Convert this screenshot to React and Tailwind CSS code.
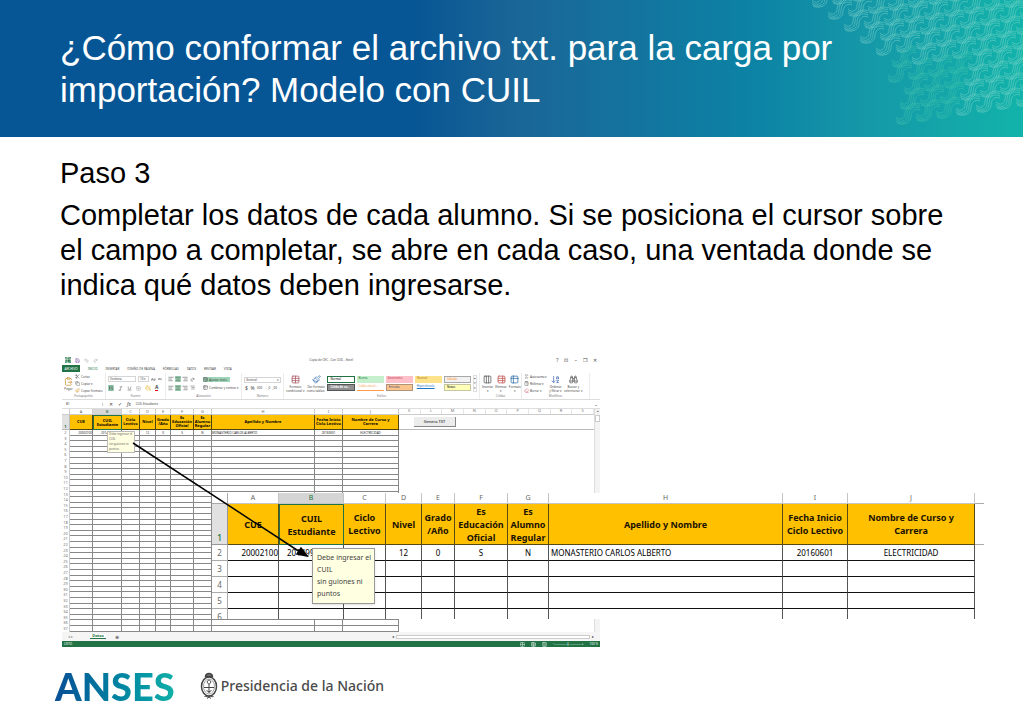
import {
  AArrowDown,
  AlignCenter,
  AlignLeft,
  AlignRight,
  ArrowDownAZ,
  Binoculars,
  Bold,
  ClipboardPaste,
  Columns3,
  Copy,
  Eraser,
  Grid2x2,
  Italic,
  PaintBucket,
  Paintbrush,
  Redo2,
  Save,
  Scissors,
  Sigma,
  Table,
  Table2,
  TableProperties,
  Underline,
  Undo2,
} from "lucide-react";

const columns = [
  { letter: "A", title: "CUE", value: "20002100", small: "w-[23px]", big: "w-[51px]", align: "text-right" },
  { letter: "B", title: "CUIL Estudiante", value: "20149951", small: "w-[29px]", big: "w-[65px]", align: "text-left pl-2" },
  { letter: "C", title: "Ciclo Lectivo", value: "", small: "w-[18px]", big: "w-[42px]", align: "text-center" },
  { letter: "D", title: "Nivel", value: "12", small: "w-[16px]", big: "w-[36px]", align: "text-center" },
  { letter: "E", title: "Grado /Año", value: "0", small: "w-[15px]", big: "w-[33px]", align: "text-center" },
  { letter: "F", title: "Es Educación Oficial", value: "S", small: "w-[23px]", big: "w-[53px]", align: "text-center" },
  { letter: "G", title: "Es Alumno Regular", value: "N", small: "w-[18px]", big: "w-[41px]", align: "text-center" },
  { letter: "H", title: "Apellido y Nombre", value: "MONASTERIO CARLOS ALBERTO", small: "w-[103px]", big: "w-[234px]", align: "text-left" },
  { letter: "I", title: "Fecha Inicio Ciclo Lectivo", value: "20160601", small: "w-[28px]", big: "w-[65px]", align: "text-center" },
  { letter: "J", title: "Nombre de Curso y Carrera", value: "ELECTRICIDAD", small: "w-[56px]", big: "w-[127px]", align: "text-center" },
];

const tabs = ["INICIO", "INSERTAR", "DISEÑO DE PÁGINA", "FÓRMULAS", "DATOS", "REVISAR", "VISTA"];

const cellStyles = [
  { label: "Normal", look: "border border-[#217346] bg-white text-black" },
  { label: "Buena", look: "bg-[#c6efce] text-[#2f7d3c]" },
  { label: "Incorrecto", look: "bg-[#ffc0ca] text-[#b0303c]" },
  { label: "Neutral", look: "bg-[#ffe38a] text-[#a8751c]" },
  { label: "Cálculo", look: "border border-[#a8a8a8] bg-[#f2f2f2] text-[#fa7d00]" },
  { label: "Celda de co...", look: "border border-[#555] bg-[#8f8f8f] text-white font-bold" },
  { label: "Celda vincul...", look: "border-b border-[#ff9b4a] text-[#fa9d50]" },
  { label: "Entrada", look: "border border-[#b0947a] bg-[#fbc58e] text-[#4f4f76]" },
  { label: "Hipervínculo", look: "text-[#1f74c4] underline" },
  { label: "Notas", look: "border border-[#c5c5a0] bg-[#ffffb8] text-black" },
];

const note = ["Debe ingresar el", "CUIL", "sin guiones ni", "puntos"];

// left limit of the woven pattern for a given height
const edge = [
  [0, 806],
  [27, 840],
  [52, 866],
  [94, 886],
  [130, 900],
];

function edgeAt(y) {
  for (let i = 1; i < edge.length; i++) {
    const [y0, x0] = edge[i - 1];
    const [y1, x1] = edge[i];
    if (y <= y1) return x0 + ((x1 - x0) * (y - y0)) / (y1 - y0);
  }
  return 1100;
}

const waves = [];
for (let i = -30; i < 40; i++) {
  for (let j = -30; j < 40; j++) {
    const x = 812 + i * 16 + j * 20;
    const y = 2 + i * 12 - j * 3;
    const floor = x > 990 ? 106 : 120;
    if (y > -12 && y < floor && x >= edgeAt(Math.max(y, 0)) && x < 1030) waves.push([x, y]);
  }
}

function Weave() {
  return (
    <svg className="absolute top-0 right-0 h-[137px] w-[223px]" viewBox="800 0 223 137" fill="none" aria-hidden="true">
      {waves.map(([x, y]) => {
        const faded = y > 60 && x < 955;
        return (
          <g
            key={`${x}:${y}`}
            transform={`translate(${x} ${y})`}
            stroke={faded ? "#4fcdb0" : "#8fdccf"}
            strokeOpacity={faded ? 0.5 : 0.55}
            strokeWidth="0.8"
          >
            <path d="M0 0c4 4 11 3 11-4s5-13 13-9" />
            <path d="M0-2c4 4 9 2 9-3s6-14 15-10" />
            <path d="M0 2c5 4 13 2 13-5s4-11 11-8" />
            <path d="M1 4c6 3 14 0 14-6s4-9 9-7" />
          </g>
        );
      })}
    </svg>
  );
}

function RibbonGroup({ label, width, children }) {
  return (
    <div className={`flex h-full shrink-0 flex-col border-r border-[#ececec] ${width}`}>
      <div className="flex min-h-0 flex-1 items-center gap-[2px] px-[2px]">{children}</div>
      <div className="h-[5px] text-center leading-[4px] text-[#777]">{label}</div>
    </div>
  );
}

function BigTool({ icon: Icon, lines, color = "text-[#555]" }) {
  return (
    <button className="flex shrink-0 flex-col items-center leading-[4px]">
      <Icon className={`mb-[1px] size-[9px] ${color}`} />
      {lines.map((line) => (
        <span key={line}>{line}</span>
      ))}
    </button>
  );
}

function SmallTool({ icon: Icon, label, color = "text-[#555]" }) {
  return (
    <button className="flex items-center gap-[1px] whitespace-nowrap leading-[4px]">
      <Icon className={`size-[5px] ${color}`} />
      {label}
    </button>
  );
}

function Ribbon() {
  return (
    <div className="flex h-[28px] border-b border-[#dcdcdc] pt-[1px]">
      <RibbonGroup label="Portapapeles" width="w-[44px]">
        <BigTool icon={ClipboardPaste} lines={["Pegar"]} color="text-[#c8963c]" />
        <div className="flex flex-col gap-[2px]">
          <SmallTool icon={Scissors} label="Cortar" />
          <SmallTool icon={Copy} label="Copiar ▾" />
          <SmallTool icon={Paintbrush} label="Copiar formato" color="text-[#d59a2e]" />
        </div>
      </RibbonGroup>
      <RibbonGroup label="Fuente" width="w-[60px]">
        <div className="flex flex-1 flex-col gap-[3px]">
          <div className="flex items-center gap-[2px]">
            <div className="h-[6px] w-[28px] border border-[#d5d5d5] pl-[1px] leading-[4px]">Verdana</div>
            <div className="h-[6px] w-[11px] border border-[#d5d5d5] pl-[1px] leading-[4px]">10 ▾</div>
            <AArrowDown className="size-[5px]" />
            <AArrowDown className="size-[4px]" />
          </div>
          <div className="flex items-center gap-[4px]">
            <Bold className="size-[6px] bg-[#9fd5b7]" />
            <Italic className="size-[5px]" />
            <Underline className="size-[5px]" />
            <Grid2x2 className="size-[5px] text-[#aaa]" />
            <PaintBucket className="size-[6px] text-[#e0b020]" />
            <span className="border-b border-red-600 text-[5px] leading-[5px] font-bold">A</span>
          </div>
        </div>
      </RibbonGroup>
      <RibbonGroup label="Alineación" width="w-[76px]">
        <div className="flex flex-col gap-[3px]">
          <div className="flex gap-[1px]">
            <AlignLeft className="size-[6px]" />
            <AlignCenter className="size-[6px] bg-[#9fd5b7]" />
            <AlignRight className="size-[6px]" />
          </div>
          <div className="flex gap-[1px]">
            <AlignLeft className="size-[6px]" />
            <AlignCenter className="size-[6px] bg-[#9fd5b7]" />
            <AlignRight className="size-[6px]" />
          </div>
        </div>
        <div className="flex flex-col gap-[3px]">
          <Redo2 className="size-[5px]" />
          <AlignRight className="size-[5px]" />
        </div>
        <div className="flex flex-col items-start gap-[3px] pl-[6px]">
          <span className="bg-[#9fd5b7] pr-[3px]">
            <SmallTool icon={TableProperties} label="Ajustar texto" />
          </span>
          <SmallTool icon={Table2} label="Combinar y centrar ▾" />
        </div>
      </RibbonGroup>
      <RibbonGroup label="Número" width="w-[42px]">
        <div className="flex flex-1 flex-col gap-[3px]">
          <div className="flex h-[6px] justify-between border border-[#d5d5d5] px-[1px] leading-[4px]">
            <span>General</span>
            <span>▾</span>
          </div>
          <div className="flex justify-between px-[1px] text-[5px] leading-[5px]">
            <span>$</span>
            <span>%</span>
            <span className="text-[3px]">000</span>
            <span className="text-[3px]">←,0</span>
            <span className="text-[3px]">,00→</span>
          </div>
        </div>
      </RibbonGroup>
      <RibbonGroup label="Estilos" width="w-[196px]">
        <BigTool icon={Table} lines={["Formato", "condicional ▾"]} color="text-[#a85560]" />
        <BigTool icon={Paintbrush} lines={["Dar formato", "como tabla ▾"]} color="text-[#4b7fb8]" />
        <div className="grid flex-1 grid-cols-5 gap-x-[2px] gap-y-[1px]">
          {cellStyles.map((style) => (
            <div key={style.label} className={`h-[7px] pl-[2px] leading-[5px] whitespace-nowrap ${style.look}`}>
              {style.label}
            </div>
          ))}
        </div>
        <div className="border border-[#ddd] text-[3px] leading-[5px]">
          <div>▴</div>
          <div>▾</div>
          <div>▾</div>
        </div>
      </RibbonGroup>
      <RibbonGroup label="Celdas" width="w-[42px]">
        <BigTool icon={Columns3} lines={["Insertar", "▾"]} />
        <BigTool icon={TableProperties} lines={["Eliminar", "▾"]} color="text-[#c0504d]" />
        <BigTool icon={Table2} lines={["Formato", "▾"]} color="text-[#2f6da8]" />
      </RibbonGroup>
      <RibbonGroup label="Modificar" width="w-[68px]">
        <div className="flex flex-col gap-[2px]">
          <SmallTool icon={Sigma} label="Autosuma ▾" />
          <SmallTool icon={ClipboardPaste} label="Rellenar ▾" />
          <SmallTool icon={Eraser} label="Borrar ▾" color="text-[#d0566a]" />
        </div>
        <BigTool icon={ArrowDownAZ} lines={["Ordenar", "y filtrar ▾"]} color="text-[#4b6fb8]" />
        <BigTool icon={Binoculars} lines={["Buscar y", "seleccionar ▾"]} />
      </RibbonGroup>
    </div>
  );
}

function SmallSheet() {
  const rows = Array.from({ length: 36 }, (_, i) => i + 2);

  return (
    <table className="w-[337px] shrink-0 table-fixed border-separate border-spacing-0 text-[4px] leading-[4px] text-[#222]">
      <thead>
        <tr className="h-[6px] text-[#666]">
          <th className="w-[8px] border-r border-b border-[#ccc] p-0"></th>
          {columns.map((col) => (
            <th
              key={col.letter}
              className={`border-r border-b border-[#ccc] p-0 font-normal ${col.small} ${col.letter === "B" ? "bg-[#d8d8d8] text-[#217346]" : ""}`}
            >
              {col.letter}
            </th>
          ))}
        </tr>
        <tr className="h-[15px]">
          <th className="border-r border-b border-[#bbb] bg-[#e1e1e1] p-0 align-bottom text-[#217346]">1</th>
          {columns.map((col) => (
            <th
              key={col.letter}
              className={`bg-[#ffc000] py-0 text-black ${col.letter === "J" ? "px-2" : "px-0"} ${col.letter === "B" ? "border border-[#217346]" : "border-r border-b border-[#4d4210]"}`}
            >
              {col.title}
            </th>
          ))}
        </tr>
      </thead>
      <tbody>
        {rows.map((row, i) => (
          <tr key={row} className={i % 5 === 1 || i % 5 === 3 ? "h-[5px]" : "h-[6px]"}>
            <td className="border-r border-[#ccc] p-0 text-center text-[#777]">{row}</td>
            {columns.map((col) => (
              <td key={col.letter} className={`border-r border-b border-[#888] p-0 text-[3px] whitespace-nowrap ${col.align}`}>
                {row === 2 ? col.value : ""}
              </td>
            ))}
          </tr>
        ))}
      </tbody>
    </table>
  );
}

function Workbook() {
  return (
    <div className="relative w-[538px] bg-white font-[Noto_Sans,sans-serif] text-[3px] leading-[4px] text-[#444]">
      <div className="flex h-[10px] items-center gap-[4px] px-[3px]">
        <Table2 className="size-[6px] rounded-[1px] bg-[#217346] text-white" />
        <Save className="size-[5px] text-[#7a4fa0]" />
        <Undo2 className="size-[5px] text-[#999]" />
        <Redo2 className="size-[5px] text-[#999]" />
        <span className="flex-1 pl-[8px] text-center">Copia de CEC - Con CUIL - Excel</span>
        <span className="flex gap-[6px] text-[5px]">
          <span>?</span>
          <span>⊡</span>
          <span>–</span>
          <span>❐</span>
          <span>✕</span>
        </span>
      </div>
      <div className="flex h-[7px] items-center gap-[8px]">
        <button className="h-full w-[18px] bg-[#217346] text-white">ARCHIVO</button>
        {tabs.map((tab) => (
          <button key={tab} className={tab === "INICIO" ? "text-[#217346]" : ""}>
            {tab}
          </button>
        ))}
      </div>
      <Ribbon />
      <div className="flex h-[9px] items-center gap-[5px] border-b border-[#ddd] pl-[4px]">
        <span className="w-[30px]">B1</span>
        <span>⋮</span>
        <span className="text-[5px]">✕</span>
        <span className="text-[5px]">✓</span>
        <span className="font-serif text-[5px] italic">fx</span>
        <span className="flex-1">CUIL Estudiante</span>
        <span className="pr-[2px] text-[5px]">⌄</span>
      </div>
      <div className="flex h-[223px] overflow-hidden">
        <SmallSheet />
        <div className="flex-1">
          <div className="grid h-[6px] grid-cols-9 border-b border-[#ccc] text-center text-[4px] text-[#777]">
            {["K", "L", "M", "N", "O", "P", "Q", "R", "S"].map((letter) => (
              <span key={letter} className="border-r border-[#e5e5e5]">
                {letter}
              </span>
            ))}
          </div>
          <div className="h-[15px] border-b border-[#bbb] pt-[2px] pl-[15px]">
            <button className="h-[10px] w-[42px] border-r border-b border-[#888] bg-[#ececec] text-[4px] text-black">Genera TXT</button>
          </div>
        </div>
        <div className="w-[6px] border-l border-[#ddd] bg-[#f3f3f3]">
          <div className="h-[6px] text-center">▴</div>
          <div className="h-[7px] border border-[#ccc] bg-white"></div>
        </div>
      </div>
      <div className="flex h-[9px] items-center bg-[#f5f5f5] text-[4px]">
        <span className="w-[28px] pl-[6px] text-[#999]">◂ ▸</span>
        <span className="w-[16px] border-b border-[#217346] bg-white text-center font-bold text-[#217346]">Datos</span>
        <span className="flex-1 pl-[9px] text-[5px]">⊕</span>
        <span>◂</span>
        <span className="mx-[2px] h-[4px] w-[194px] border border-[#ccc] bg-white"></span>
        <span className="pr-[6px]">▸</span>
      </div>
      <div className="flex h-[6px] items-center gap-[6px] bg-[#217346] px-[2px] text-white">
        <span className="flex-1">LISTO</span>
        <Grid2x2 className="size-[5px]" />
        <Table className="size-[5px]" />
        <Columns3 className="size-[5px]" />
        <span>−──────┃──────+</span>
        <span>100 %</span>
      </div>
      <div className="absolute top-[76px] left-[45px] w-[28px] border border-[#bbb] bg-[#ffffe1] pl-[1px] leading-[5px] text-[#666]">
        {note.map((line) => (
          <div key={line}>{line}</div>
        ))}
      </div>
    </div>
  );
}

function BigSheet() {
  return (
    <div className="relative h-[126px] w-[788px] overflow-hidden bg-white font-[Noto_Sans,sans-serif]">
      <div className="flex items-start">
        <table className="w-[763px] shrink-0 table-fixed border-separate border-spacing-0 text-[#222]">
          <thead>
            <tr className="h-[11px] text-[7px] leading-[9px] text-[#666]">
              <th className="w-[16px] border-r border-b border-[#aaa] p-0"></th>
              {columns.map((col) => (
                <th
                  key={col.letter}
                  className={`border-r border-b border-[#c5c5c5] p-0 align-top font-normal ${col.big} ${col.letter === "B" ? "bg-[#d5d5d5] text-[#217346]" : ""}`}
                >
                  {col.letter}
                </th>
              ))}
            </tr>
            <tr className="h-[41px] text-[9px] leading-[13px]">
              <th className="border-r border-b border-[#999] bg-[#e1e1e1] p-0 align-bottom font-medium text-[#217346]">1</th>
              {columns.map((col) => (
                <th
                  key={col.letter}
                  className={`bg-[#ffc000] py-0 text-[#1a1200] ${col.letter === "B" ? "border border-[#217346]" : "border-r border-b border-[#5b4a10]"} ${col.letter === "J" ? "px-4" : "px-0"}`}
                >
                  {col.title}
                </th>
              ))}
            </tr>
          </thead>
          <tbody>
            {[2, 3, 4, 5, 6].map((row) => (
              <tr key={row} className="h-[16px] text-[8px] leading-[14px]">
                <td className="border-r border-b border-[#aaa] p-0 text-center text-[#666]">{row}</td>
                {columns.map((col) => (
                  <td
                    key={col.letter}
                    className={`border-r border-b border-r-[#555] border-b-[#111] py-0 whitespace-nowrap text-black ${col.letter === "H" ? "pl-[2px]" : "px-0"} ${col.align}`}
                  >
                    {row === 2 ? col.value : ""}
                  </td>
                ))}
              </tr>
            ))}
          </tbody>
        </table>
        <div className="w-[9px]">
          <div className="h-[11px] border-b border-[#aaa]"></div>
          <div className="h-[41px] border-b border-[#aaa]"></div>
        </div>
      </div>
      <div className="absolute top-[55px] left-[100px] h-[56px] w-[63px] border border-[#999] bg-[#ffffe1] pt-[3px] pl-[4px] text-[7px] leading-[12px] whitespace-nowrap text-[#444] shadow-sm">
        {note.map((line) => (
          <div key={line}>{line}</div>
        ))}
      </div>
    </div>
  );
}

function Shield() {
  return (
    <svg className="h-[28px] w-[18px]" viewBox="0 0 18 28" fill="none" stroke="#444" aria-hidden="true">
      <path d="M5.500 4.500C6 0.500 12 0.500 12.500 4.500z" strokeWidth="1.500" fill="#777" />
      <ellipse cx="9" cy="14.500" rx="7.500" ry="9.500" strokeWidth="1.500" />
      <ellipse cx="9" cy="14.500" rx="5.500" ry="7.500" strokeWidth="0.500" />
      <path d="M4 15.500h10M9 12v9M6.500 18.500l2.500 1.500 2.500-1.500" strokeWidth="1" />
      <path d="M7.300 10c0-2.500 3.400-2.500 3.400 0s-3.400 2.500-3.400 0" strokeWidth="1" />
      <path d="M4.500 24.500c2-1 3 1.500 4.500 0s2.500 1 4.500 0M7 26.500l2-1.500 2 1.500" strokeWidth="1" />
    </svg>
  );
}

export default function App() {
  return (
    <div className="min-h-screen overflow-hidden bg-white font-[Liberation_Sans,Arial,sans-serif] text-black">
      <header className="relative h-[137px] bg-[linear-gradient(90deg,#065594_0%,#065594_40%,#1a6597_50%,#0c83a5_74%,#1597a8_84%,#12b3aa_100%)]">
        <Weave />
        <h1 className="relative max-w-[860px] pt-[27px] pl-[60px] text-[35px] leading-[42px] text-white">
          ¿Cómo conformar el archivo txt. para la carga por importación? Modelo con CUIL
        </h1>
      </header>

      <main className="pt-[19px] pl-[60px]">
        <div className="max-w-[910px] space-y-[7px] text-[29px] leading-[35px]">
          <p>Paso 3</p>
          <p>
            Completar los datos de cada alumno. Si se posiciona el cursor sobre el campo a completar, se abre en cada caso, una
            ventada donde se indica qué datos deben ingresarse.
          </p>
        </div>

        <figure className="relative mt-[52px] pl-[2px]">
          <Workbook />
          <div className="absolute top-[138px] left-[152px]">
            <BigSheet />
          </div>
          <svg className="absolute top-0 left-0 h-[292px] w-[300px]" viewBox="0 0 300 292" aria-hidden="true">
            <path d="M73 88L240 197" stroke="#000" strokeWidth="1.500" />
            <path d="M247 201l-10-2 4-6z" fill="#000" stroke="#000" strokeWidth="1.500" />
          </svg>
        </figure>
      </main>

      <footer className="flex items-center pt-[19px] pl-[55px]">
        <span className="bg-linear-to-r from-[#0a4f95] to-[#12b0a8] bg-clip-text font-[Lato,sans-serif] text-[38px] leading-[40px] font-black text-transparent">
          ANSES
        </span>
        <div className="ml-[25px] flex items-center gap-[3px]">
          <Shield />
          <span className="font-[Noto_Sans,sans-serif] text-[14px] leading-[20px] font-medium text-[#4a4a4a]">Presidencia de la Nación</span>
        </div>
      </footer>
    </div>
  );
}
